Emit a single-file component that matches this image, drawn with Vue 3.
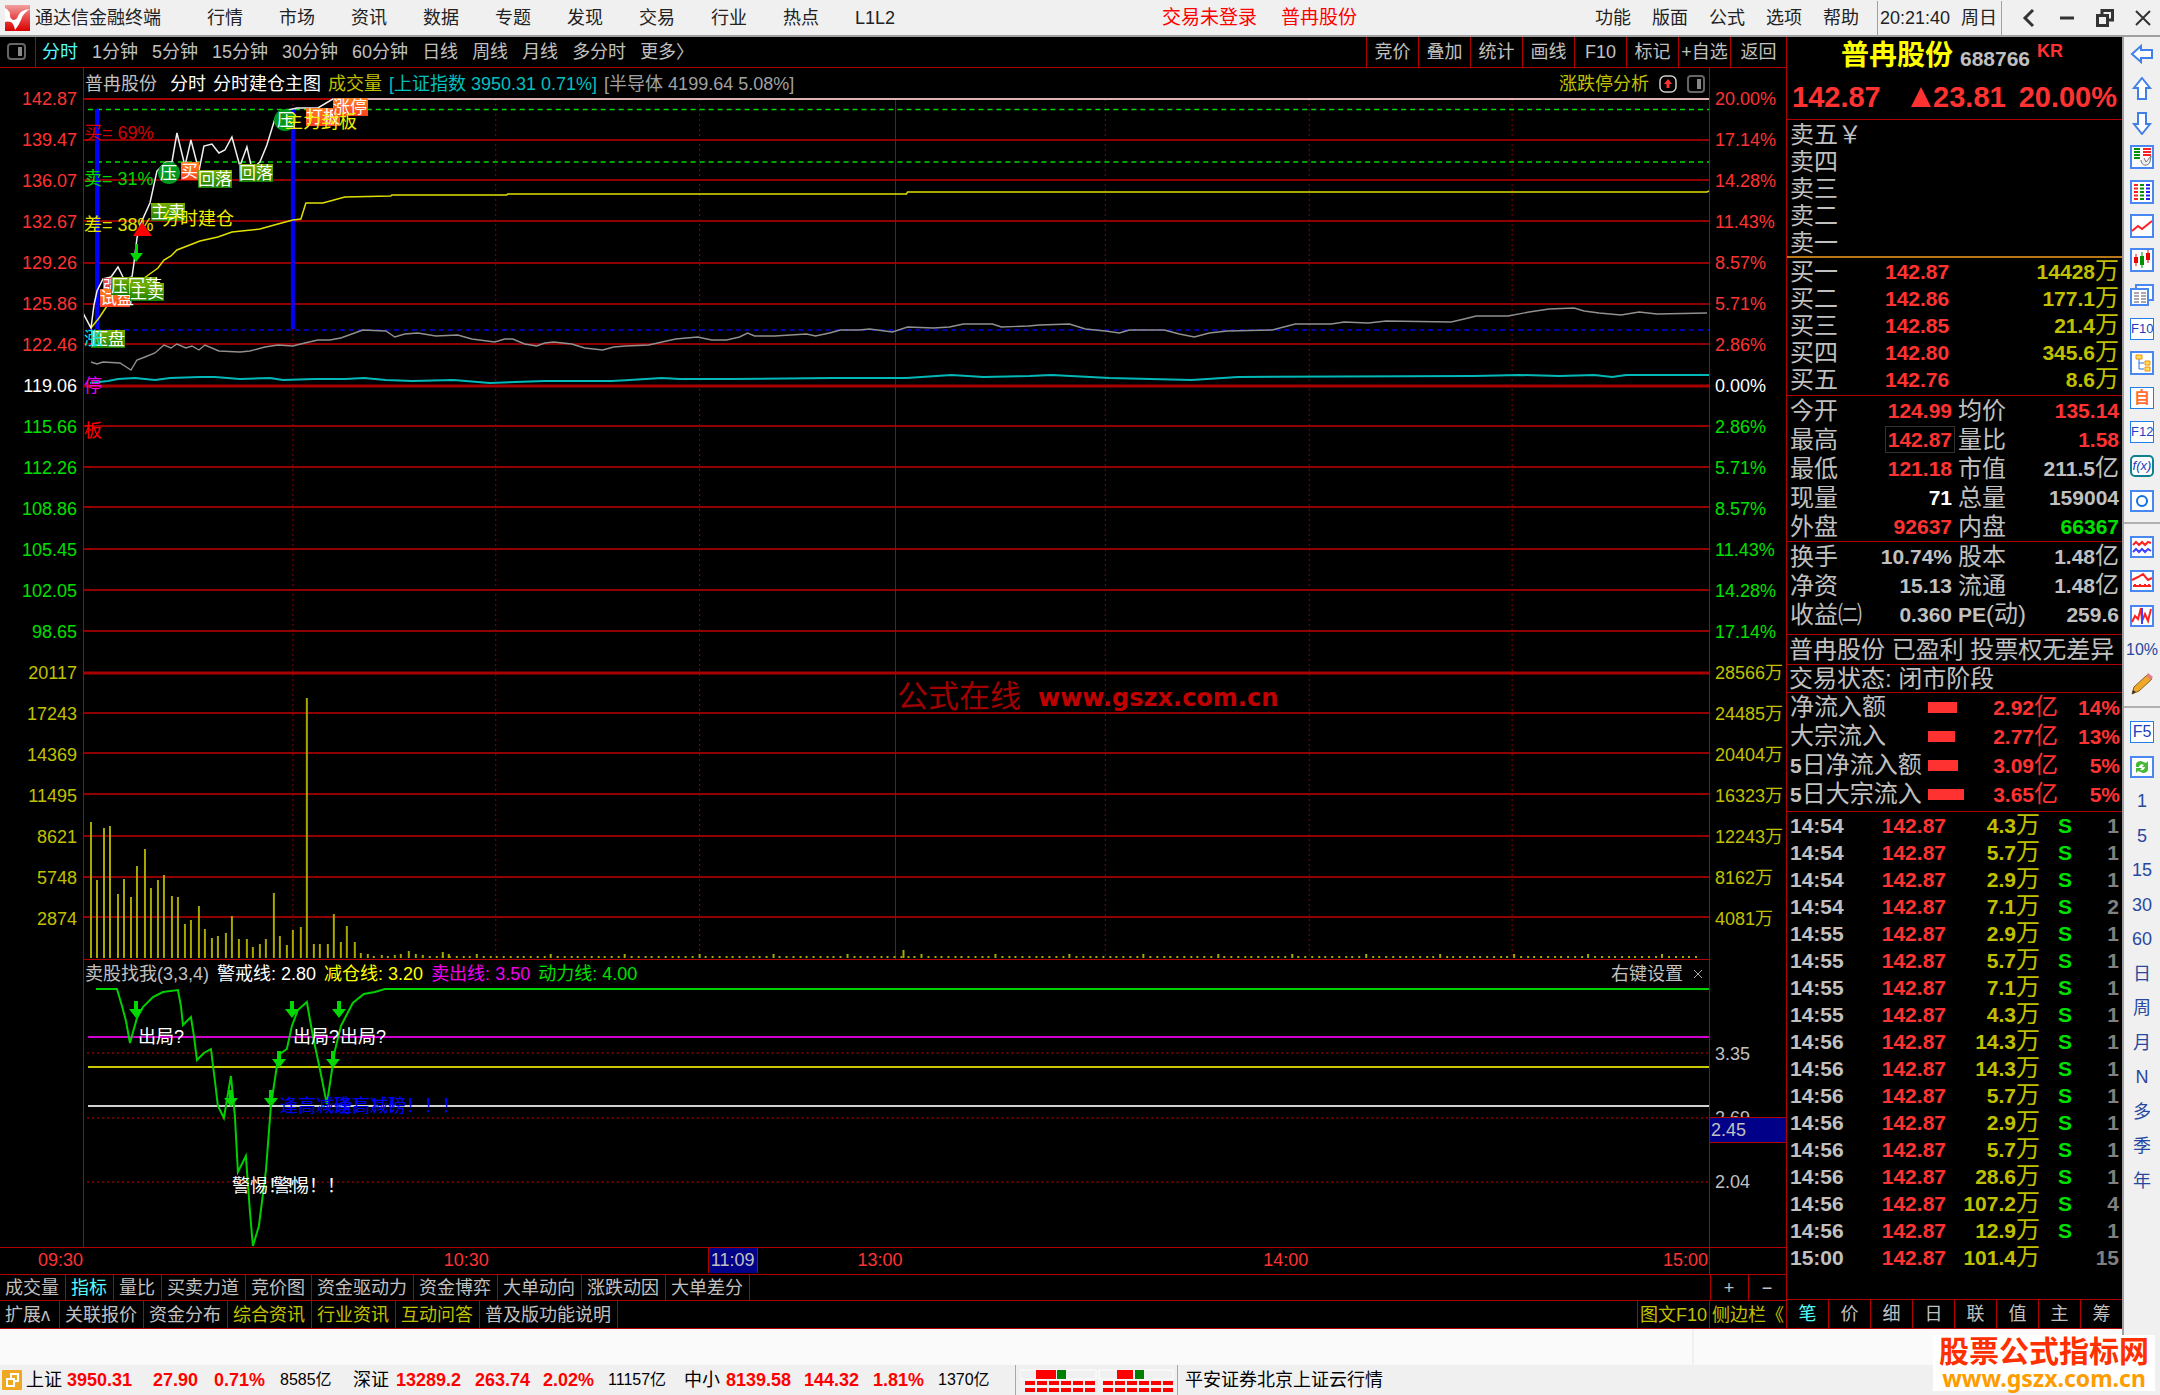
<script setup>
const menus = ['行情', '市场', '资讯', '数据', '专题', '发现', '交易', '行业', '热点', 'L1L2']
const tools = ['功能', '版面', '公式', '选项', '帮助']
const periods = ['分时', '1分钟', '5分钟', '15分钟', '30分钟', '60分钟', '日线', '周线', '月线', '多分时', '更多〉']
const actions = ['竞价', '叠加', '统计', '画线', 'F10', '标记', '+自选', '返回']

const leftAxis = [
  ['142.87', 'red'], ['139.47', 'red'], ['136.07', 'red'], ['132.67', 'red'], ['129.26', 'red'], ['125.86', 'red'], ['122.46', 'red'],
  ['119.06', 'white'],
  ['115.66', 'green'], ['112.26', 'green'], ['108.86', 'green'], ['105.45', 'green'], ['102.05', 'green'], ['98.65', 'green'],
  ['20117', 'olive'], ['17243', 'olive'], ['14369', 'olive'], ['11495', 'olive'], ['8621', 'olive'], ['5748', 'olive'], ['2874', 'olive'],
]
const rightAxis = [
  ['20.00%', 'red'], ['17.14%', 'red'], ['14.28%', 'red'], ['11.43%', 'red'], ['8.57%', 'red'], ['5.71%', 'red'], ['2.86%', 'red'],
  ['0.00%', 'white'],
  ['2.86%', 'green'], ['5.71%', 'green'], ['8.57%', 'green'], ['11.43%', 'green'], ['14.28%', 'green'], ['17.14%', 'green'],
  ['28566万', 'olive'], ['24485万', 'olive'], ['20404万', 'olive'], ['16323万', 'olive'], ['12243万', 'olive'], ['8162万', 'olive'], ['4081万', 'olive'],
]

const gridY = [139, 179, 220, 262, 303, 343, 425, 466, 506, 548, 589, 630, 712, 752, 793, 835, 876, 916]
const gridX = [293, 496, 700, 1106, 1310, 1513]

const priceLine = '83,312 91,327 94,304 97,290 103,278 111,276 118,266 124,278 132,276 134,262 137,237 141,222 150,202 157,170 166,161 172,161 177,132 185,165 191,139 199,170 204,145 212,143 219,152 225,149 232,136 240,165 247,146 252,168 260,161 267,144 275,118 284,110 297,107 318,107 333,98 1710,98'
const avgLine = '91,327 99,317 107,305 125,290 147,275 158,267 164,259 171,255 177,249 200,240 218,236 232,231 260,228 278,223 293,219 301,218 306,202 323,202 345,196 391,195 392,194 507,194 508,193 907,193 908,191 1708,191 1710,190'
const sectorLine = '91,361 97,363 103,361 120,362 131,369 137,359 145,356 155,352 164,344 171,347 177,343 186,347 192,345 199,349 205,344 219,350 240,351 250,350 265,346 278,344 293,345 305,342 318,339 330,339 341,337 363,329 386,330 395,336 405,333 418,332 436,335 458,334 472,338 495,341 505,338 513,338 525,343 537,345 545,342 554,341 572,343 585,347 603,349 614,346 626,345 649,344 676,338 698,336 712,339 727,339 740,336 748,332 755,335 775,335 807,333 816,335 830,332 841,329 860,329 870,328 893,331 908,326 934,327 950,326 964,323 993,323 1002,326 1029,325 1040,324 1070,323 1086,328 1106,330 1120,332 1130,329 1165,329 1180,333 1195,336 1210,332 1228,330 1273,329 1296,323 1332,323 1345,321 1369,322 1387,320 1452,321 1465,318 1477,315 1509,315 1530,311 1550,308 1575,307 1585,310 1600,312 1622,314 1640,311 1658,313 1708,312'
const indexLine = '90,382 108,380 118,378 135,377 155,379 170,377 200,376 215,376 240,378 270,377 283,379 315,378 345,378 364,377 386,379 412,380 454,379 490,382 545,380 612,380 630,379 662,377 680,378 730,378 834,377 907,377 952,374 984,376 1030,375 1052,374 1110,377 1192,379 1239,376 1475,375 1520,374 1560,375 1595,374 1613,376 1627,374 1710,374'
const powerLine = '96,988 117,988 122,1005 126,1020 130,1042 137,1017 143,1006 153,996 163,991 178,989 181,1005 183,1024 191,1016 194,1035 197,1059 204,1052 211,1048 215,1080 218,1105 224,1117 231,1075 235,1115 238,1171 246,1155 250,1210 253,1245 259,1225 266,1170 271,1105 277,1065 280,1053 287,1048 292,1025 298,1009 307,1001 313,1035 320,1068 327,1103 335,1050 341,1025 353,1002 364,993 375,991 385,988 1710,988'

const bars = [
  [91, 821], [97, 879], [104, 827], [110, 825], [118, 893], [124, 878], [131, 896], [137, 865], [145, 848], [151, 887],
  [158, 879], [164, 874], [172, 895], [178, 896], [185, 923], [191, 919], [199, 905], [205, 928], [212, 937], [218, 935],
  [226, 932], [232, 915], [239, 938], [247, 938], [253, 946], [260, 943], [266, 938], [274, 892], [280, 935], [287, 944],
  [293, 929], [301, 926], [307, 697], [314, 943], [320, 943], [328, 943], [334, 913], [341, 941], [347, 925], [355, 941],
  [361, 952], [368, 953], [374, 955], [382, 954], [388, 955], [395, 954], [401, 953], [409, 950], [416, 953], [423, 954],
  [443, 951], [449, 953], [904, 949],
]
for (let i = 0; i < 189; i++) bars.push([430 + Math.round(i * 6.74), i % 11 === 7 ? 953 : 955])

const arrows = [[136, 1017], [292, 1017], [339, 1017], [231, 1106], [271, 1106], [279, 1067], [333, 1067]]

const chips = [
  { x: 151, y: 202, w: 34, t: '主卖', k: 'g' },
  { x: 103, y: 277, w: 18, t: '强', k: 'p' },
  { x: 100, y: 288, w: 30, t: '试盘', k: 'o' },
  { x: 111, y: 276, w: 46, t: '压回落', k: 'g' },
  { x: 130, y: 282, w: 34, t: '主卖', k: 'g' },
  { x: 91, y: 329, w: 34, t: '压盘', k: 'g' },
  { x: 181, y: 161, w: 18, t: '买', k: 'o' },
  { x: 198, y: 169, w: 34, t: '回落', k: 'g' },
  { x: 239, y: 163, w: 34, t: '回落', k: 'g' },
  { x: 306, y: 107, w: 34, t: '打板', k: 'o' },
  { x: 333, y: 97, w: 35, t: '涨停', k: 'o' },
]

const asks = ['卖五', '卖四', '卖三', '卖二', '卖一']
const bids = [['买一', '142.87', '14428'], ['买二', '142.86', '177.1'], ['买三', '142.85', '21.4'], ['买四', '142.80', '345.6'], ['买五', '142.76', '8.6']]
const stats = [
  ['今开', '124.99', 'red', '均价', '135.14', 'red', ''],
  ['最高', '142.87', 'red boxed', '量比', '1.58', 'red', ''],
  ['最低', '121.18', 'red', '市值', '211.5', '', '亿'],
  ['现量', '71', 'white', '总量', '159004', '', ''],
  ['外盘', '92637', 'red', '内盘', '66367', 'green', ''],
]
const stats2 = [
  ['换手', '10.74%', '', '股本', '1.48', '', '亿'],
  ['净资', '15.13', '', '流通', '1.48', '', '亿'],
  ['收益㈡', '0.360', '', 'PE(动)', '259.6', '', ''],
]
const flows = [['', '净流入额', 29, '2.92', '14%'], ['', '大宗流入', 27, '2.77', '13%'], ['5', '日净流入额', 30, '3.09', '5%'], ['5', '日大宗流入', 36, '3.65', '5%']]
const ticks = [
  ['14:54', '4.3', 'S', 1], ['14:54', '5.7', 'S', 1], ['14:54', '2.9', 'S', 1], ['14:54', '7.1', 'S', 2],
  ['14:55', '2.9', 'S', 1], ['14:55', '5.7', 'S', 1], ['14:55', '7.1', 'S', 1], ['14:55', '4.3', 'S', 1],
  ['14:56', '14.3', 'S', 1], ['14:56', '14.3', 'S', 1], ['14:56', '5.7', 'S', 1], ['14:56', '2.9', 'S', 1],
  ['14:56', '5.7', 'S', 1], ['14:56', '28.6', 'S', 1], ['14:56', '107.2', 'S', 4], ['14:56', '12.9', 'S', 1], ['15:00', '101.4', '', 15],
]
const quoteTabs = ['笔', '价', '细', '日', '联', '值', '主', '筹']
const indicatorTabs = ['成交量', '指标', '量比', '买卖力道', '竞价图', '资金驱动力', '资金博弈', '大单动向', '涨跌动因', '大单差分']
const infoTabs = [['扩展ʌ', 'more'], ['关联报价', ''], ['资金分布', ''], ['综合资讯', 'olive'], ['行业资讯', 'olive'], ['互动问答', 'olive'], ['普及版功能说明', '']]
const sideTexts = ['1', '5', '15', '30', '60', '日', '周', '月', 'N', '多', '季', '年']
const indices = [
  ['上证', '3950.31', '27.90', '0.71%', '8585亿', 'i1'],
  ['深证', '13289.2', '263.74', '2.02%', '11157亿', 'i2'],
  ['中小', '8139.58', '144.32', '1.81%', '1370亿', 'i3'],
]
</script>

<template>
  <div class="app">
    <header class="topbar">
      <svg class="logo" viewBox="0 0 25 26"><defs><linearGradient id="lg" x1="0" y1="0" x2="0" y2="1"><stop offset="0" stop-color="#f0a0a0" /><stop offset=".5" stop-color="#e84848" /><stop offset="1" stop-color="#d80000" /></linearGradient></defs><rect width="25" height="26" fill="url(#lg)" /><path d="M0 3Q3 4 5 8 4 13 8 15 12 15 13 11 15 5 25 4 18 8 16 15 14 20 10 25 9 19 6 17 2 16 0 17Z" fill="#fff" /></svg>
      <span class="brand">通达信金融终端</span>
      <nav class="menus"><button v-for="m in menus" :key="m">{{ m }}</button></nav>
      <div class="login"><button>交易未登录</button><button>普冉股份</button></div>
      <nav class="tools"><button v-for="m in tools" :key="m">{{ m }}</button></nav>
      <div class="clock"><time>20:21:40</time><span>周日</span></div>
      <div class="winbtns">
        <button aria-label="后退"><svg viewBox="0 0 20 20"><path d="M14 2 6 10 14 18" fill="none" stroke="#333" stroke-width="3" /></svg></button>
        <button aria-label="最小化"><svg viewBox="0 0 20 20"><path d="M3 10H17" stroke="#333" stroke-width="3" /></svg></button>
        <button aria-label="还原"><svg viewBox="0 0 20 20"><path d="M2.500 7.500H12.500V17.500H2.500ZM7 7V2.500H17.500V12H13" fill="none" stroke="#333" stroke-width="3" /></svg></button>
        <button aria-label="关闭"><svg viewBox="0 0 20 20"><path d="M3 3 17 17M17 3 3 17" stroke="#333" stroke-width="2" /></svg></button>
      </div>
    </header>

    <div class="middle">
      <div class="workspace">
        <main class="terminal">
          <section class="charts">
            <div class="periods">
              <button class="pane" aria-label="侧栏"><svg viewBox="0 0 20 18"><rect x="1" y="1" width="17" height="15" rx="3" fill="none" stroke="#666" stroke-width="2" /><rect x="11" y="4" width="4" height="9" fill="#888" /></svg></button>
              <div class="plist"><button v-for="(p, i) in periods" :key="p" :class="{ on: i === 0 }">{{ p }}</button></div>
              <div class="actions"><button v-for="a in actions" :key="a">{{ a }}</button></div>
            </div>

            <div class="body">
              <div class="axis left"><ul><li v-for="(a, i) in leftAxis" :key="i" :class="a[1]">{{ a[0] }}</li></ul></div>
              <div class="plots">
                <div class="legend">
                  <span class="nm">普冉股份</span><span class="white">分时</span><span class="white">分时建仓主图</span><span class="olive">成交量</span><span class="teal">[上证指数 3950.31 0.71%]</span><span class="dim">[半导体 4199.64 5.08%]</span>
                  <button class="olive end">涨跌停分析</button>
                  <svg class="mini" viewBox="0 0 18 18"><rect x="1" y="1" width="16" height="16" rx="5" fill="none" stroke="#ccc" stroke-width="1.500" /><path d="M9 4 13 9H10.500V13H7.500V9H5Z" fill="#ff3232" /></svg>
                  <svg class="mini" viewBox="0 0 18 18"><rect x="1" y="1" width="16" height="16" rx="3" fill="none" stroke="#666" stroke-width="2" /><rect x="10" y="4" width="4" height="10" fill="#888" /></svg>
                </div>
                <div class="plot main">
                  <svg class="lines" viewBox="84 97 1626 861" preserveAspectRatio="none">
                    <g stroke="#900000" stroke-width="2">
                      <line v-for="y in gridY" :key="y" x1="83" x2="1710" :y1="y" :y2="y" />
                    </g>
                    <g stroke="#a80000">
                      <line x1="83" x2="1710" y1="98" y2="98" stroke-width="2" />
                      <line x1="83" x2="1710" y1="385" y2="385" stroke-width="3" />
                      <line x1="83" x2="1710" y1="672" y2="672" stroke-width="3" />
                      <line x1="896" x2="896" y1="98" y2="958" stroke-width="1" />
                    </g>
                    <g stroke="#900000" stroke-dasharray="2 3"><line v-for="x in gridX" :key="x" :x1="x" :x2="x" y1="98" y2="958" /></g>
                    <g stroke="#a8a800" stroke-width="2"><line v-for="(b, i) in bars" :key="i" :x1="b[0]" :x2="b[0]" :y1="b[1]" y2="957" /></g>
                    <path d="M88 108.500H1710M88 161H1710" stroke="#00d800" stroke-width="1.500" stroke-dasharray="5 4" />
                    <path d="M88 329H1710" stroke="#0000e8" stroke-width="1.500" stroke-dasharray="5 4" />
                    <path d="M97 108V328M293 108V328" stroke="#0000ff" stroke-width="4" />
                    <g fill="none" stroke-width="1.400">
                      <polyline :points="sectorLine" stroke="#909090" />
                      <polyline :points="indexLine" stroke="#00b8b8" stroke-width="2" />
                      <polyline :points="avgLine" stroke="#e0e000" stroke-width="1.500" />
                      <polyline :points="priceLine" stroke="#f0f0f0" stroke-width="1.500" />
                    </g>
                  </svg>
                  <svg class="notes">
                    <defs>
                      <linearGradient id="cg" x1="0" y1="0" x2="0" y2="1"><stop offset="0" stop-color="#78b000" /><stop offset="1" stop-color="#188000" /></linearGradient>
                      <linearGradient id="co" x1="0" y1="0" x2="0" y2="1"><stop offset="0" stop-color="#ff8020" /><stop offset="1" stop-color="#ff4020" /></linearGradient>
                    </defs>
                    <g transform="translate(-84 -97)">
                      <text x="84" y="138" fill="#d80000">买= 69%</text>
                      <text x="84" y="184" fill="#00d800">卖= 31%</text>
                      <text x="84" y="230" fill="#e0e000">差= 38%</text>
                      <text x="84" y="391" fill="#f000f0">停</text>
                      <text x="84" y="436" fill="#ff0000">板</text>
                      <g v-for="(c, i) in chips" :key="i">
                        <rect :x="c.x" :y="c.y" :width="c.w" height="18" :fill="c.k === 'g' ? 'url(#cg)' : c.k === 'o' ? 'url(#co)' : '#e04848'" />
                        <text class="chip" :x="c.x" :y="c.y + 15">{{ c.t }}</text>
                      </g>
                      <text x="84" y="344" fill="#00e8e8">涨</text>
                      <circle cx="169" cy="172" r="11" fill="#009820" /><text class="chip" x="160" y="178">压</text>
                      <circle cx="285" cy="119" r="11" fill="#009820" /><text class="chip" x="277" y="125">压</text>
                      <text x="285" y="127" fill="#f0f000">主力封板</text>
                      <text x="162" y="224" fill="#f0f000">分时建仓</text>
                      <path d="M142 221 152 235H133Z" fill="#ff0000" />
                      <path d="M135 243H138V252H143L136 261 130 252H135Z" fill="#00d800" />
                      <text class="mark" x="897" y="706" fill="#a00000">公式在线</text>
                      <text class="mark-url" x="1038" y="705" fill="#c00000">www.gszx.com.cn</text>
                    </g>
                  </svg>
                </div>
                <div class="legend sub">
                  <span>卖股找我(3,3,4)</span><span class="white">警戒线: 2.80</span><span class="yellow">减仓线: 3.20</span><span class="magenta">卖出线: 3.50</span><span class="green">动力线: 4.00</span>
                  <button class="end">右键设置</button><button class="x" aria-label="关闭指标"><svg viewBox="0 0 10 10"><path d="M1 1 9 9M9 1 1 9" stroke="#aaa" /></svg></button>
                </div>
                <div class="plot power">
                  <svg class="lines" viewBox="84 987 1626 259" preserveAspectRatio="none">
                    <path d="M87 1052H1710M87 1117H1710M87 1181H1710" stroke="#900000" stroke-width="1.500" stroke-dasharray="2 3" />
                    <path d="M88 1036H1710" stroke="#d000d0" stroke-width="2" /><path d="M88 1066H1710" stroke="#c8c800" stroke-width="2" /><path d="M88 1105H1710" stroke="#d0d0d0" stroke-width="2" />
                    <polyline :points="powerLine" fill="none" stroke="#00d000" stroke-width="2" />
                  </svg>
                  <svg class="notes">
                    <g transform="translate(-84 -987)">
                      <path v-for="(a, i) in arrows" :key="i" :d="`M${a[0] - 2} ${a[1] - 17}h4v8h5l-7 9l-7-9h5z`" fill="#00d800" />
                      <g fill="#ffffff"><text x="138" y="1042">出局?</text><text x="293" y="1042">出局?</text><text x="340" y="1042">出局?</text>
                      <text x="232" y="1191">警惕！！</text><text x="273" y="1191">警惕！！</text></g>
                      <g fill="#0000ff"><text x="280" y="1111">逢高减磅！！！</text><text x="334" y="1111">逢高减磅！！！</text></g>
                    </g>
                  </svg>
                </div>
              </div>
              <div class="axis right">
                <ul><li v-for="(a, i) in rightAxis" :key="i" :class="a[1]">{{ a[0] }}</li></ul>
                <div class="subaxis"><span>3.35</span><span>2.69</span><span>2.04</span><output>2.45</output></div>
              </div>
            </div>

            <div class="times">
              <span class="t0">09:30</span><span class="t1">10:30</span><span class="t2"><b>11:09</b></span><span class="t3">13:00</span><span class="t1">14:00</span><span class="t4">15:00</span><span class="t5"></span>
            </div>
            <div class="tabs"><button v-for="(t, i) in indicatorTabs" :key="t" :class="{ on: i === 1 }">{{ t }}</button><div class="zoom"><button>+</button><button>−</button></div></div>
            <div class="tabs info"><button v-for="t in infoTabs" :key="t[0]" :class="t[1]">{{ t[0] }}</button><div class="extra"><button class="olive">图文F10</button><button class="olive">侧边栏《</button></div></div>
          </section>

          <aside class="quote">
            <div class="head">
              <h1>普冉股份 <b>688766</b> <i>KR</i></h1>
              <p><span>142.87</span><span class="chg"><svg viewBox="0 0 20 20"><path d="M10 0 20 20H0Z" fill="#ff3232" /></svg>23.81</span><span class="pct">20.00%</span></p>
            </div>
            <ul class="asks"><li v-for="(a, i) in asks" :key="a">{{ a }}<template v-if="i === 0">￥</template></li></ul>
            <table class="bids"><tbody><tr v-for="b in bids" :key="b[0]"><th>{{ b[0] }}</th><td class="red">{{ b[1] }}</td><td class="olive">{{ b[2] }}<em>万</em></td></tr></tbody></table>
            <table v-for="(g, k) in [stats, stats2]" :key="k" :class="['stats', 's' + k]"><tbody><tr v-for="s in g" :key="s[0]"><th>{{ s[0] }}</th><td class="v"><span :class="s[2]">{{ s[1] }}</span></td><th class="second"><template v-if="s[3] === 'PE(动)'"><b>PE</b>(动)</template><template v-else>{{ s[3] }}</template></th><td :class="s[5]">{{ s[4] }}<em>{{ s[6] }}</em></td></tr></tbody></table>
            <p class="note n1">普冉股份 已盈利 投票权无差异</p>
            <p class="note n2">交易状态: 闭市阶段</p>
            <table class="flows"><tbody><tr v-for="f in flows" :key="f[1]"><th><b>{{ f[0] }}</b>{{ f[1] }}</th><td class="bar"><i :style="{ width: f[2] + 'px' }"></i></td><td class="amt">{{ f[3] }}<em>亿</em></td><td>{{ f[4] }}</td></tr></tbody></table>
            <table class="ticks"><tbody><tr v-for="(t, i) in ticks" :key="i"><td>{{ t[0] }}</td><td class="red">142.87</td><td class="olive">{{ t[1] }}<em>万</em></td><td class="green">{{ t[2] }}</td><td class="cnt">{{ t[3] }}</td></tr></tbody></table>
            <nav class="qtabs"><button v-for="(t, i) in quoteTabs" :key="t" :class="{ on: i === 0 }">{{ t }}</button></nav>
          </aside>
        </main>
        <div class="band"></div>
      </div>

      <nav class="side">
        <div class="grp g1">
          <button aria-label="返回"><svg viewBox="0 0 24 24"><path d="M2 12 11 4V8H22V16H11V20Z" class="ar" /></svg></button>
          <button aria-label="上"><svg viewBox="0 0 24 24"><path d="M12 1 20 11H16V22H8V11H4Z" class="ar" /></svg></button>
          <button aria-label="下"><svg viewBox="0 0 24 24"><path d="M12 23 20 13H16V2H8V13H4Z" class="ar" /></svg></button>
          <button aria-label="报价"><svg viewBox="0 0 24 24"><rect class="bx" x="1" y="1" width="22" height="22" /><path d="M4 4H10M4 7H10M4 10H10M4 13H10" stroke="#009000" stroke-width="2" /><path d="M13 4H21M13 7H21M13 10H21" stroke="#ff2020" stroke-width="2" /><path d="M11 15C11 21 18 22 20 17L21 11 16 17 14 13" stroke="#777" fill="#eee" /></svg></button>
          <button aria-label="列表"><svg viewBox="0 0 24 24"><rect class="bx" x="1" y="1" width="22" height="22" /><path d="M6 4V20" stroke="#ff2020" stroke-width="4" stroke-dasharray="2 1.500" /><path d="M12 4V20" stroke="#009000" stroke-width="4" stroke-dasharray="2 1.500" /><path d="M18 4V20" stroke="#2020ff" stroke-width="4" stroke-dasharray="2 1.500" /></svg></button>
          <button aria-label="走势"><svg viewBox="0 0 24 24"><rect class="bx" x="1" y="1" width="22" height="22" /><path d="M2 17 8 12 12 15 22 7" class="rd" /></svg></button>
          <button aria-label="K线"><svg viewBox="0 0 24 24"><rect class="bx" x="1" y="1" width="22" height="22" /><path d="M6 6V18M18 2V15" stroke="#f00000" /><path d="M4 9H8V15H4ZM16 5H20V12H16Z" fill="#f00000" /><path d="M12 4V20" stroke="#009000" /><path d="M10 8H14V17H10Z" fill="#009000" /></svg></button>
          <button aria-label="文档"><svg viewBox="0 0 24 24"><path class="bx" d="M6 2H23V17H6Z" /><path class="bx" d="M1 6H18V22H1Z" /><path d="M4 10H9M4 13H9M4 16H9M4 19H9M11 10H16M11 13H16M11 16H16M11 19H16" stroke="#555" /></svg></button>
          <button class="lbl"><span>F10</span></button>
          <button aria-label="板块树"><svg viewBox="0 0 24 24"><rect class="bx" x="1" y="1" width="22" height="22" /><path d="M9 8V18H14M9 12H14" fill="none" stroke="#3070e0" /><path d="M6 4H12V8H6ZM15 10H20V14H15ZM15 16H20V20H15Z" fill="#ffe060" stroke="#f09000" /></svg></button>
          <button class="lbl zi"><span>自</span></button>
          <button class="lbl"><span>F12</span></button>
          <button class="lbl fx"><span>f(x)</span></button>
          <button aria-label="圆"><svg viewBox="0 0 24 24"><rect class="bx" x="1" y="2" width="22" height="20" /><circle cx="12" cy="12" r="5" fill="none" stroke="#1070e0" stroke-width="2" /></svg></button>
        </div>
        <div class="grp g2">
          <button aria-label="叠加"><svg viewBox="0 0 24 24"><rect class="bx" x="1" y="2" width="22" height="20" /><path d="M3 10 6 7 9 10 12 7 15 10 18 7 21 8" class="rd" /><path d="M3 17 6 14 9 17 12 14 15 17 18 14 21 16" class="rd bl" /></svg></button>
          <button aria-label="面积"><svg viewBox="0 0 24 24"><rect class="bx" x="1" y="2" width="22" height="20" /><path d="M2 11 8 8 13 5 18 11 22 9M3 17H21M5 15V18M10 15V18M15 15V18M19 15V18" class="rd" /></svg></button>
          <button aria-label="波动"><svg viewBox="0 0 24 24"><rect class="bx" x="1" y="2" width="22" height="20" /><path d="M2 18 5 12 8 15 11 4 12 17 15 10 18 17 21 5" class="rd" /><path d="M12 4V20" class="rd bl" /></svg></button>
          <button class="ten">10%</button>
          <button aria-label="画笔"><svg viewBox="0 0 24 24"><path d="M2 22 4 15 17 3 22 7 9 19Z" fill="#f0a828" stroke="#886020" /><path d="M16 4 18 1 23 5 21 8Z" fill="#e08080" /><path d="M2 22 3 18 6 20Z" fill="#333" /></svg></button>
        </div>
        <div class="grp g3">
          <button class="lbl f5"><span>F5</span></button>
          <button aria-label="刷新"><svg viewBox="0 0 24 24"><rect class="bx" x="1" y="2" width="22" height="20" /><path d="M6 12Q5 6 11 6L16 8 18 6V12H12L14 10Q10 8 9 12ZM18 12Q19 18 13 18L8 16 6 18V13H12L10 15Q14 16 15 12Z" fill="#48b838" /></svg></button>
          <button v-for="t in sideTexts" :key="t">{{ t }}</button>
        </div>
      </nav>
    </div>

    <footer class="status">
      <svg class="sic" viewBox="0 0 20 20"><rect width="20" height="20" rx="1" fill="#f0a820" /><path d="M5 9H12V16H5ZM9 8V4H16V11H13" fill="none" stroke="#fff" stroke-width="2" /></svg>
      <div v-for="x in indices" :key="x[0]" :class="['idx', x[5]]"><span>{{ x[0] }}</span><b>{{ x[1] }}</b><b>{{ x[2] }}</b><b>{{ x[3] }}</b><small>{{ x[4] }}</small></div>
      <div class="meters">
        <svg viewBox="0 0 160 24"><path d="M0 1H76V10H0ZM79 1H153V10H79Z" fill="#f0f0f0" stroke="#fff" /><path d="M16 1H36V10H16ZM97 1H113V10H97Z" fill="#f00" /><path d="M37 1H46V10H37ZM115 1H124V10H115Z" fill="#008000" /><path d="M5 14H75M5 21H75M83 14H153M83 21H153" stroke="#f00" stroke-width="4" stroke-dasharray="10 2" /></svg>
      </div>
      <span class="server">平安证券北京上证云行情</span>
      <div class="badge"><strong>股票公式指标网</strong><a href="#">www.gszx.com.cn</a></div>
    </footer>
  </div>
</template>

<style>
body { background: #f0f0f0; }
</style>

<style scoped>
.app { position: relative; font: 18px/26px "Liberation Sans", "Noto Sans CJK SC", sans-serif; color: #c0c0c0; background: #f0f0f0; min-width: 1600px; overflow: hidden; border-bottom: 2px solid #1c2c3c; }
.app * { box-sizing: border-box; }
button { font: inherit; color: inherit; background: none; border: 0; padding: 0; margin: 0; white-space: nowrap; }
ul, p, h1 { margin: 0; padding: 0; list-style: none; }
svg { display: block; }
table { border-collapse: collapse; border-spacing: 0; }
th, td { padding: 0; text-align: left; font-weight: 400; }
em, i { font-style: normal; }
.red { color: #ff3232; } .green { color: #00e000; } .olive { color: #c0c000; } .yellow { color: #ffff00; }
.white { color: #fff; } .teal { color: #00c0c0; } .dim { color: #a0a0a0; } .magenta { color: #f000f0; }

.topbar { display: flex; align-items: center; height: 37px; border-bottom: 2px solid #a0a0a0; color: #222; }
.logo { width: 25px; height: 26px; margin: 0 5px 0 5px; }
.brand { width: 172px; }
.menus { display: flex; gap: 36px; }
.login { display: flex; gap: 24px; margin-left: auto; margin-right: 238px; font-size: 19px; color: #ff0000; }
.tools { display: flex; gap: 21px; margin-right: 18px; }
.clock { display: flex; justify-content: space-between; width: 125px; height: 34px; line-height: 34px; padding: 0 4px 0 2px; border: solid #a0a0a0; border-width: 0 1px; }
.winbtns { display: flex; gap: 18px; padding: 0 7px 0 17px; }
.winbtns svg { width: 20px; height: 20px; }

.middle { display: flex; }
.workspace { flex: 1; min-width: 0; }
.terminal { display: flex; background: #000; border-bottom: 1px solid #b00000; }
.charts { flex: 1; min-width: 0; }
.periods { display: flex; height: 31px; line-height: 30px; border-bottom: 1px solid #b00000; }
.pane { width: 36px; padding-left: 7px; border-right: 1px solid #b00000; }
.pane svg { width: 20px; height: 18px; }
.plist { display: flex; gap: 14px; padding-left: 6px; flex: 1; }
.actions { display: flex; }
.actions button { width: 52px; border-left: 1px solid #b00000; }
.actions button:last-child { width: 56px; }
.on { color: #54fcfc; }

.body { display: grid; grid-template-columns: 83px 1fr 77px; }
.axis { padding-top: 11px; }
.axis ul { display: flex; flex-direction: column; height: 860px; }
.axis li { flex: 1; line-height: 41px; }
.left { text-align: right; }
.left li { padding-right: 6px; }
.right { border-left: 1px solid #b00000; }
.right li { padding-left: 5px; }
.subaxis { position: relative; padding: 83px 0 0 5px; }
.subaxis span { display: block; line-height: 64px; }
.subaxis output { position: absolute; left: 0; right: 0; top: 178px; height: 26px; line-height: 24px; padding-left: 1px; background: #000088; border: solid #b00000; border-width: 1px 0; }
.plots { min-width: 0; border-left: 1px solid #b00000; }
.legend { display: flex; align-items: center; height: 30px; gap: 7px; padding: 1px 4px 0 1px; white-space: nowrap; }
.nm { margin-right: 6px; }
.end { margin-left: auto; }
.mini { width: 18px; height: 18px; margin-left: 3px; }
.sub { height: 29px; gap: 8px; padding-top: 0; border-top: 1px solid #b00000; }
.x { padding: 0 2px 0 2px; }
.x svg { width: 10px; height: 10px; }
.plot { position: relative; }
.main { height: 861px; }
.power { height: 259px; }
.lines, .notes { position: absolute; left: 0; top: 0; width: 100%; height: 100%; }
.chip { fill: #fff; font-size: 17px; }
.mark { font-size: 31px; }
.mark-url { font: bold 24px "DejaVu Sans", sans-serif; }

.times { display: flex; height: 27px; line-height: 25px; border-top: 1px solid #b00000; color: #ff3232; text-align: right; }
.t0 { width: 83px; } .t1 { flex: 406; } .t2 { flex: 269; } .t3 { flex: 145; } .t4 { flex: 400; padding-right: 1px; }
.t5 { width: 77px; border-left: 1px solid #b00000; }
.t2 b { display: inline-block; font-weight: 400; color: #c0c0c0; background: #000088; padding: 0 2px; border: solid #b00000; border-width: 0 1px; }
.tabs { display: flex; height: 26px; border-top: 1px solid #b00000; }
.tabs button { padding: 0 6px 0 5px; border-right: 1px solid #b00000; line-height: 24px; }
.tabs .more { padding-right: 9px; }
.info { height: 28px; }
.zoom, .extra { display: flex; margin-left: auto; }
.zoom button { width: 38px; border-width: 0 0 0 1px; border-left: 1px solid #b00000; }
.extra button { width: 77px; padding: 0 0 0 2px; text-align: left; border-right: 0; border-left: 1px solid #b00000; }
.extra button:first-child { width: 72px; }

.quote { display: flex; flex-direction: column; width: 336px; border-left: 1px solid #b00000; font-size: 24px; line-height: 27px; }
.quote table { width: 100%; table-layout: fixed; }
.quote td, .quote td b, .quote th b { font-size: 21px; font-weight: 700; }
.quote td em { font-size: 24px; font-weight: 400; line-height: 20px; }
.head { height: 83px; border-bottom: 1px solid #b00000; color: #ff3232; font-weight: 700; }
.head h1 { display: flex; gap: 7px; justify-content: center; padding: 2px 5px 0 0; height: 36px; font-size: 28px; line-height: 34px; color: #ffff00; }
.head h1 b { font-size: 21px; line-height: 40px; color: #c0c0c0; }
.head h1 i { font-size: 18px; line-height: 24px; color: #ff3232; }
.head p { display: flex; align-items: center; padding: 6px 5px 0; font-size: 29px; line-height: 36px; }
.chg { display: flex; align-items: center; gap: 2px; margin-left: auto; }
.chg svg { width: 20px; height: 20px; }
.pct { margin-left: 13px; }
.asks { padding: 1px 0 0 3px; border-bottom: 2px solid #b87818; }
.asks li { height: 27px; }
.bids { border-bottom: 1px solid #b00000; }
.bids tr { height: 27px; }
.bids th { width: 98px; padding-left: 3px; }
.bids td:last-child, .stats td { text-align: right; padding-right: 3px; }
.bids tbody::after, .flows tbody::after { content: ""; display: block; height: 2px; }
.stats { border-bottom: 1px solid #b00000; }
.stats tr { height: 29px; }
.stats th { width: 76px; padding-left: 3px; white-space: nowrap; }
.stats .v { width: 92px; padding-right: 0; white-space: nowrap; }
.stats .v span { padding: 2px 3px; }
.stats .v .boxed { outline: 1px solid #333; outline-offset: -1px; }
.s1 tbody::after { content: ""; display: block; height: 5px; }
.note { padding-left: 2px; border-bottom: 1px solid #b00000; white-space: nowrap; }
.n1 { height: 30px; line-height: 29px; }
.n2 { height: 28px; }
.flows { border-bottom: 1px solid #b00000; }
.flows tr { height: 29px; }
.flows th { width: 141px; padding-left: 3px; white-space: nowrap; }
.flows td { text-align: right; color: #ff3232; padding-right: 2px; }
.flows .bar { width: 40px; text-align: left; }
.flows .bar i { display: block; height: 11px; background: #ff3232; }
.flows .amt { width: 92px; }
.ticks tr { height: 27px; }
.ticks td:nth-child(1) { width: 70px; padding-left: 3px; }
.ticks td:nth-child(2) { width: 89px; text-align: right; }
.ticks td:nth-child(3) { width: 94px; text-align: right; }
.ticks td:nth-child(4) { width: 34px; padding-left: 18px; }
.ticks .cnt { text-align: right; padding-right: 3px; color: #808080; }
.qtabs { display: flex; margin-top: auto; border-top: 1px solid #b00000; }
.qtabs button { flex: 1; height: 28px; font-size: 18px; border-left: 1px solid #b00000; }
.qtabs button:first-child { border-left: 0; }
.band { height: 36px; background: linear-gradient(#f0f0f0, #f0f0f0) calc(100% - 428px) 0 / 2px 100% no-repeat #fafafa; }

.side { width: 38px; border-left: 2px solid #a0a0a0; color: #2848a0; }
.grp { display: flex; flex-direction: column; }
.grp button { flex: 1; display: flex; align-items: center; justify-content: center; }
.grp svg { width: 24px; height: 24px; }
.g1 { height: 485px; padding-bottom: 4px; }
.g2 { height: 184px; padding: 6px 0 5px; border-top: 2px solid #b0b0b0; }
.g3 { height: 492px; padding-top: 7px; border-top: 2px solid #b0b0b0; }
.ar { fill: #fff; stroke: #4080e8; stroke-width: 2; }
.bx { fill: #fff; stroke: #4888f0; stroke-width: 2; }
.rd { fill: none; stroke: #ff2020; stroke-width: 2; }
.bl { stroke: #4040ff; }
.lbl span { width: 24px; height: 22px; font-size: 13px; line-height: 20px; text-align: center; color: #2040c0; background: #fff; border: 1px solid #2080e8; }
.f5 span { font-size: 16px; }
.zi span { color: #ff7030; font-size: 16px; font-weight: 700; }
.fx span { font-style: italic; border: 2px solid #108090; border-radius: 5px; line-height: 18px; }
.grp .ten { font-size: 16px; }

.status { position: relative; display: flex; align-items: center; height: 30px; color: #000; white-space: nowrap; }
.sic { width: 20px; height: 20px; margin: 0 4px 0 2px; }
.idx { display: grid; }
.idx b { color: #ff0000; }
.idx small { font-size: 16px; }
.i1 { grid-template-columns: 41px 86px 61px 66px 73px; }
.i2 { grid-template-columns: 43px 79px 68px 65px 76px; }
.i3 { grid-template-columns: 42px 78px 69px 65px 77px; }
.meters { padding-left: 4px; border: solid #a8a8a8; border-width: 0 1px; width: 163px; height: 30px; padding-top: 4px; }
.meters svg { width: 160px; height: 24px; }
.server { margin-left: 7px; }
.badge { position: absolute; right: 5px; bottom: 4px; width: 222px; height: 56px; background: #fff; display: flex; flex-direction: column; align-items: center; }
.badge strong { font-size: 30px; line-height: 34px; color: #ff3000; }
.badge a { font: bold 23px/18px "Noto Sans", sans-serif; color: #ff9c00; text-decoration: none; }
</style>
